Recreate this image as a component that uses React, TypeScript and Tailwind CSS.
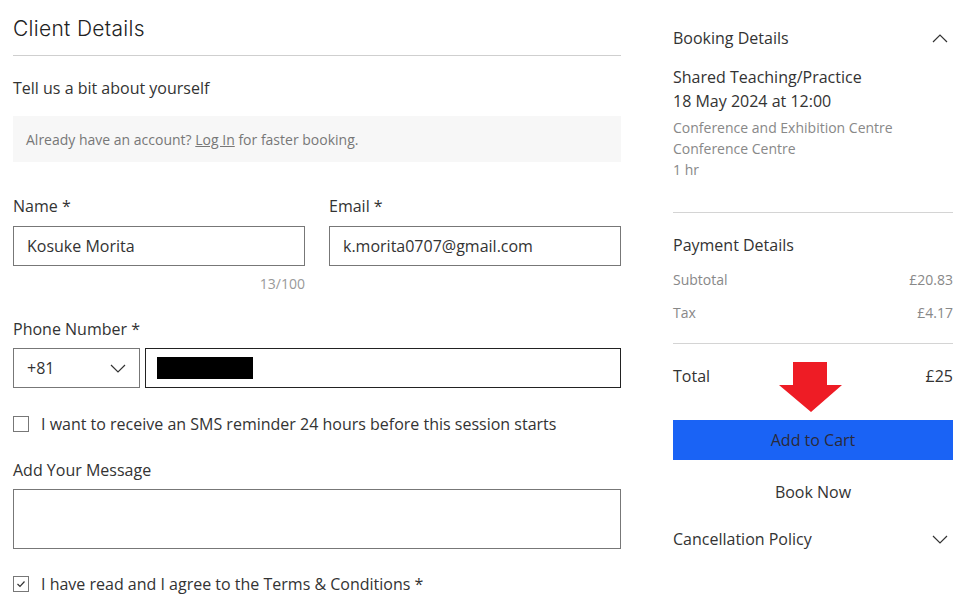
import React from "react";

const body = { fontFamily: '"Open Sans", "Noto Sans", sans-serif' };

function Chevron({ up = false }: { up?: boolean }) {
  return (
    <svg width="16" height="9" viewBox="0 0 16 9" className="shrink-0">
      <polyline
        points={up ? "1,8 8,1 15,8" : "1,1 8,8 15,1"}
        fill="none"
        stroke="#333"
        strokeWidth="1.2"
      />
    </svg>
  );
}

function Checkbox({ checked = false }: { checked?: boolean }) {
  return (
    <span className="w-4 h-4 border border-[#777] bg-white flex items-center justify-center shrink-0">
      {checked && (
        <svg width="10" height="8" viewBox="0 0 10 8">
          <polyline points="1.5,4 4,6.5 8.5,1.5" fill="none" stroke="#333" strokeWidth="1.2" />
        </svg>
      )}
    </span>
  );
}

function Field({ label, value }: { label: string; value: string }) {
  return (
    <div className="flex flex-col">
      <div className="text-base leading-6 text-[#333]">{label}</div>
      <div className="mt-2 h-10 border border-[#777] flex items-center px-[13px] text-base text-[#333]">{value}</div>
    </div>
  );
}

export default function App() {
  return (
    <div className="w-[979px] h-[606px] bg-white overflow-hidden flex text-[#333]" style={body}>
      {/* Client details form */}
      <section className="w-[608px] ml-[13px] flex flex-col">
        <h1
          className="mt-[15px] h-7 text-[21px] leading-7 font-light tracking-[0.3px] text-[#222]"
          style={{ fontFamily: 'Inter, "Open Sans", sans-serif' }}
        >
          Client Details
        </h1>
        <div className="mt-[12px] h-px bg-[#cfcfcf]" />
        <p className="mt-5 text-base leading-6">Tell us a bit about yourself</p>
        <div className="mt-4 h-[46px] bg-[#f7f7f7] flex items-center px-[13px] text-sm text-[#777]">
          <span className="pt-px">
            Already have an account? <span className="underline">Log In</span> for faster booking.
          </span>
        </div>

        <div className="mt-8 grid grid-cols-2 gap-x-6">
          <Field label="Name *" value="Kosuke Morita" />
          <Field label="Email *" value="k.morita0707@gmail.com" />
          <div className="mt-2 text-sm leading-5 text-[#999] text-right">13/100</div>
        </div>

        <div className="mt-[23px] text-base leading-6">Phone Number *</div>
        <div className="mt-[7px] flex gap-[5px] h-10">
          <div className="w-[127px] border border-[#777] flex items-center justify-between pl-[13px] pr-[13px] text-base">
            <span>+81</span>
            <Chevron />
          </div>
          <div className="flex-1 border border-[#222] flex items-center pl-[11px]">
            <span className="w-[96px] h-[22px] bg-black" />
          </div>
        </div>

        <label className="mt-6 flex items-center gap-3 text-base leading-6">
          <Checkbox />
          <span>I want to receive an SMS reminder 24 hours before this session starts</span>
        </label>

        <div className="mt-[22px] text-base leading-6">Add Your Message</div>
        <div className="mt-[7px] h-[60px] border border-[#777]" />

        <label className="mt-[23px] flex items-center gap-3 text-base leading-6">
          <Checkbox checked />
          <span>I have read and I agree to the Terms &amp; Conditions *</span>
        </label>
      </section>

      {/* Booking summary */}
      <aside className="w-[280px] ml-[52px] flex flex-col relative">
        <div className="mt-[26px] flex items-center justify-between pr-[5px]">
          <span className="text-base leading-6">Booking Details</span>
          <Chevron up />
        </div>
        <div className="mt-[15px] text-base leading-6">Shared Teaching/Practice</div>
        <div className="text-base leading-6">18 May 2024 at 12:00</div>
        <div className="mt-[4px] text-sm leading-[21px] text-[#888]">
          <div>Conference and Exhibition Centre</div>
          <div>Conference Centre</div>
          <div>1 hr</div>
        </div>
        <div className="mt-[32px] h-px bg-[#d4d4d4]" />

        <div className="mt-5 text-base leading-6">Payment Details</div>
        <div className="mt-[13px] flex justify-between text-sm leading-5 text-[#888]">
          <span>Subtotal</span>
          <span>£20.83</span>
        </div>
        <div className="mt-[13px] flex justify-between text-sm leading-5 text-[#888]">
          <span>Tax</span>
          <span>£4.17</span>
        </div>
        <div className="mt-5 h-px bg-[#d4d4d4]" />

        <div className="mt-5 flex justify-between text-base leading-6">
          <span>Total</span>
          <span>£25</span>
        </div>

        <button className="mt-8 h-10 bg-[#1a63f5] text-base text-[#2a2a3a]">Add to Cart</button>
        <button className="mt-3 h-10 text-base">Book Now</button>

        <div className="mt-[15px] flex items-center justify-between pr-[5px]">
          <span className="text-base leading-6">Cancellation Policy</span>
          <Chevron />
        </div>

        {/* annotation arrow over the summary */}
        <svg
          className="absolute left-[106px] top-[362px]"
          width="64"
          height="51"
          viewBox="0 0 64 51"
        >
          <polygon points="14,0 48,0 48,23 63,23 32,50 0,23 14,23" fill="#ee1c25" />
        </svg>
      </aside>
    </div>
  );
}
